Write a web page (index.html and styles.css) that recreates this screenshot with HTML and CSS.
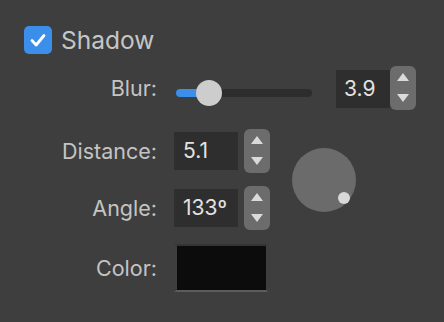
FILE: index.html
```html
<!DOCTYPE html>
<html>
<head>
<meta charset="utf-8">
<link rel="stylesheet" href="styles.css">
</head>
<body>
<div class="panel">
  <div class="check-row">
    <span class="checkbox">
      <svg width="28" height="28" viewBox="0 0 28 28"><path d="M8 14.5 L12.2 19 L20 9.5" fill="none" stroke="#fff" stroke-width="2.8" stroke-linecap="round" stroke-linejoin="round"/></svg>
    </span>
    <span class="title">Shadow</span>
  </div>
  <div class="grid">
    <span class="label row-blur">Blur:</span>
    <div class="blur-controls row-blur">
      <div class="slider">
        <div class="track"><div class="fill"></div></div>
        <div class="knob"></div>
      </div>
      <div class="field field-sm">3.9</div>
      <div class="stepper"><span class="up"></span><span class="down"></span></div>
    </div>

    <span class="label row-dist">Distance:</span>
    <div class="spin row-dist">
      <div class="field">5.1</div>
      <div class="stepper"><span class="up"></span><span class="down"></span></div>
    </div>

    <div class="dial"><div class="dot"></div></div>

    <span class="label row-angle">Angle:</span>
    <div class="spin row-angle">
      <div class="field">133º</div>
      <div class="stepper"><span class="up"></span><span class="down"></span></div>
    </div>

    <span class="label row-color">Color:</span>
    <div class="well row-color"></div>
  </div>
</div>
</body>
</html>
```
FILE: styles.css
```css
html, body {
  margin: 0;
  padding: 0;
  background: #3e3e3e;
}
body {
  width: 444px;
  height: 322px;
  overflow: hidden;
  font-family: Inter, "Liberation Sans", sans-serif;
}
.panel {
  padding: 26px 0 0 24px;
}
.check-row {
  display: flex;
  align-items: center;
  gap: 9px;
  height: 28px;
}
.checkbox {
  width: 28px;
  height: 28px;
  border-radius: 5px;
  background: #3b8eea;
  display: block;
}
.checkbox svg { display: block; }
.title {
  font-size: 24.5px;
  color: #c6c6c6;
}
.grid {
  margin-top: 12px;
  display: grid;
  grid-template-columns: 133px auto 1fr;
  grid-template-rows: 44px 44px 44px 48px;
  column-gap: 17px;
  row-gap: 16px;
  align-items: center;
}
.label {
  grid-column: 1;
  text-align: right;
  font-size: 21.5px;
  color: #c4c4c4;
}
.row-blur { grid-row: 1; }
.row-dist { grid-row: 2; margin-top: 6px; }
.row-angle { grid-row: 3; }
.row-color { grid-row: 4; margin-top: -4px; }
.blur-controls {
  grid-column: 2 / span 2;
  display: flex;
  align-items: center;
}
.slider {
  position: relative;
  width: 136px;
  height: 26px;
  margin-left: 2px;
  margin-top: 10px;
  margin-right: 24px;
}
.track {
  position: absolute;
  left: 0;
  right: 0;
  top: 9px;
  height: 8px;
  border-radius: 4px;
  background: #2d2d2d;
  overflow: hidden;
}
.fill {
  width: 30px;
  height: 100%;
  background: #3b8eea;
}
.knob {
  position: absolute;
  left: 20px;
  top: 0;
  width: 26px;
  height: 26px;
  border-radius: 50%;
  background: #cdcdcd;
}
.spin {
  grid-column: 2;
  display: flex;
  align-items: center;
  gap: 6px;
}
.field {
  width: 56px;
  height: 38px;
  box-sizing: border-box;
  padding-left: 9px;
  background: #2e2e2e;
  color: #e2e2e2;
  font-size: 21px;
  line-height: 38px;
}
.field-sm {
  width: 54px;
  padding-left: 8px;
  margin-top: 2px;
}
.spin .field { width: 64px; }
.stepper {
  width: 26px;
  height: 44px;
  border-radius: 6px;
  background: #6c6c6c;
  display: flex;
  flex-direction: column;
  align-items: center;
  justify-content: space-between;
  padding: 7px 0 8px;
  box-sizing: border-box;
}
.up, .down {
  width: 0;
  height: 0;
  border-left: 6px solid transparent;
  border-right: 6px solid transparent;
}
.up { border-bottom: 8px solid #dadada; }
.down { border-top: 8px solid #dadada; }
.dial {
  grid-column: 3;
  grid-row: 2 / span 2;
  width: 64px;
  height: 64px;
  border-radius: 50%;
  background: #6b6b6b;
  margin-left: 5px;
  margin-top: 4px;
  position: relative;
}
.dot {
  position: absolute;
  left: 46px;
  top: 44px;
  width: 12px;
  height: 12px;
  border-radius: 50%;
  background: #d8d8d8;
}
.well {
  grid-column: 2;
  width: 94px;
  height: 48px;
  box-sizing: border-box;
  border-top: 2px solid #343434;
  border-left: 3px solid #3e3e3e;
  border-right: 2px solid #3e3e3e;
  border-bottom: 2px solid #5c5c5c;
  background: #0c0c0c;
}
```
